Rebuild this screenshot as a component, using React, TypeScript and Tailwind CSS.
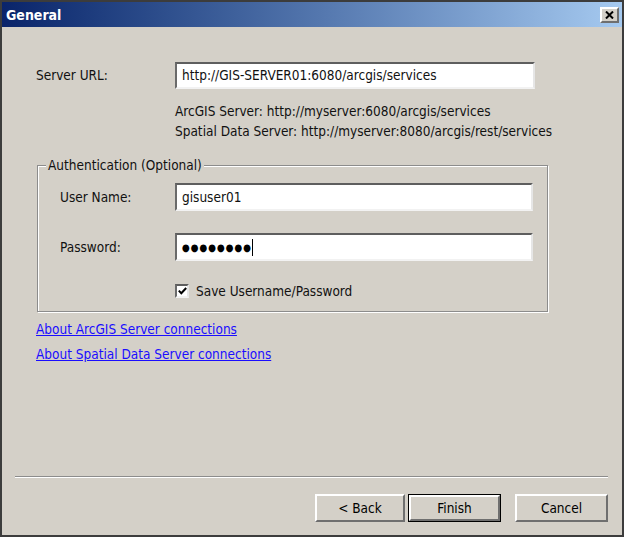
import React from 'react';

const sunken =
  'bg-white border-2 border-t-[#5e5e5e] border-l-[#6a6a6a] border-b-[#f2f2f2] border-r-[#e6e6e6]';
const raised =
  'bg-[#d4d0c8] border-2 border-t-[#ffffff] border-l-[#ffffff] border-b-[#6f6f6f] border-r-[#6f6f6f] text-[13.5px] text-black';

const CloseButton = () => (
  <div className={`w-[19px] h-[16px] flex items-center justify-center ${raised} border`}>
    <svg width="9" height="8" viewBox="0 0 9 8">
      <path d="M1 0.5 L8 7.5 M8 0.5 L1 7.5" stroke="#000" strokeWidth="2" />
    </svg>
  </div>
);

const Checkbox = () => (
  <div className={`w-[14px] h-[14px] flex items-center justify-center ${sunken}`}>
    <svg width="9" height="8" viewBox="0 0 9 8">
      <path d="M0.8 3.6 L3.3 6.2 L8.2 1" fill="none" stroke="#000" strokeWidth="2" />
    </svg>
  </div>
);

export default function App() {
  return (
    <div
      className="w-[624px] h-[537px] bg-[#d4d0c8] border-2 border-[#3c3c3c] flex flex-col text-[13.5px] text-[#111]"
      style={{ fontFamily: '"DejaVu Sans Condensed", "DejaVu Sans", sans-serif' }}
    >
      {/* title bar */}
      <div className="h-[25px] bg-gradient-to-r from-[#0a246a] to-[#a6caf0] flex items-center justify-between pl-[4px] pr-[3px]">
        <span className="text-white font-bold text-[14px] leading-none">General</span>
        <CloseButton />
      </div>

      {/* server url */}
      <div className="flex items-center mt-[35px] pl-[34px]">
        <span className="w-[139px]">Server URL:</span>
        <div className={`w-[360px] h-[27px] flex items-center pl-[5px] ${sunken}`}>
          http://GIS-SERVER01:6080/arcgis/services
        </div>
      </div>
      <div className="ml-[173px] mt-[12px] leading-[20px]">
        <div>ArcGIS Server: http://myserver:6080/arcgis/services</div>
        <div>Spatial Data Server: http://myserver:8080/arcgis/rest/services</div>
      </div>

      {/* authentication group */}
      <div className="relative mt-[24px] ml-[35px] w-[511px] h-[147px] border border-[#8c8c8c] shadow-[1px_1px_0_#ffffff,inset_1px_1px_0_#ffffff]">
        <span className="absolute -top-[10px] left-[8px] px-[2px] bg-[#d4d0c8] leading-[18px]">
          Authentication (Optional)
        </span>
        <div className="flex items-center mt-[17px] pl-[22px]">
          <span className="w-[115px]">User Name:</span>
          <div className={`w-[358px] h-[28px] flex items-center pl-[5px] ${sunken}`}>gisuser01</div>
        </div>
        <div className="flex items-center mt-[22px] pl-[22px]">
          <span className="w-[115px]">Password:</span>
          <div className={`w-[358px] h-[28px] flex items-center pl-[5px] ${sunken}`}>
            <span className="text-[10px] tracking-[0.9px] text-black">●●●●●●●●</span>
            <span className="w-[1px] h-[17px] bg-black" />
          </div>
        </div>
        <div className="flex items-center gap-[7px] mt-[20px] pl-[137px]">
          <Checkbox />
          <span>Save Username/Password</span>
        </div>
      </div>

      {/* help links */}
      <div className="ml-[34px] mt-[7px] leading-[20px]">
        <a href="#" className="text-[#1a0dff] underline block">About ArcGIS Server connections</a>
        <a href="#" className="text-[#1a0dff] underline block mt-[5px]">About Spatial Data Server connections</a>
      </div>

      {/* footer */}
      <div className="mt-auto pb-[13px]">
        <div className="ml-[13px] mr-[14px] border-t border-t-[#8c8c8c] border-b border-b-[#ffffff]" />
        <div className="flex justify-end pr-[14px] mt-[16px]">
          <button className={`w-[90px] h-[28px] ${raised}`}>&lt; Back</button>
          <div className="ml-[3px] border border-black">
            <button className={`w-[91px] h-[26px] ${raised}`}>Finish</button>
          </div>
          <button className={`w-[93px] h-[28px] ml-[14px] ${raised}`}>Cancel</button>
        </div>
      </div>
    </div>
  );
}
